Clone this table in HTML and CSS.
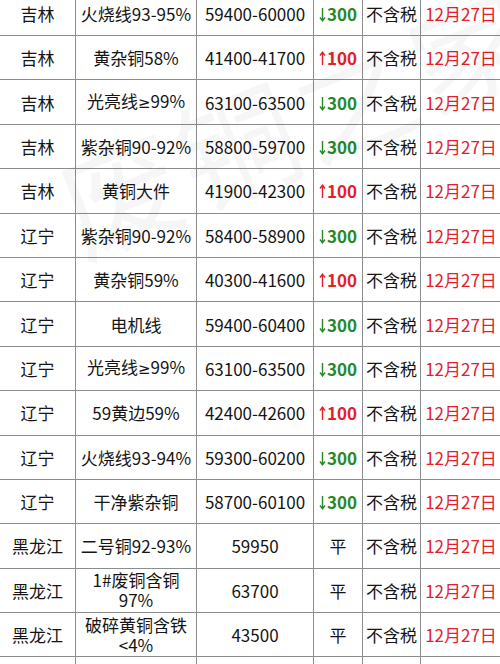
FILE: index.html
```html
<!DOCTYPE html>
<html lang="zh">
<head>
<meta charset="utf-8">
<title>铜价</title>
<link rel="stylesheet" href="styles.css">
</head>
<body>
<div class="page">
<table class="price">
<colgroup>
<col class="c1"><col class="c2"><col class="c3"><col class="c4"><col class="c5"><col class="c6">
</colgroup>
<tbody>
<tr><td>吉林</td><td>火烧线93-95%</td><td>59400-60000</td><td class="down"><svg class="ar" viewBox="0 0 7 15"><path d="M3.5 1V13.5M1 10.5L3.5 13.8L6 10.5"/></svg>300</td><td>不含税</td><td class="date">12月27日</td></tr>
<tr><td>吉林</td><td>黄杂铜58%</td><td>41400-41700</td><td class="up"><svg class="ar" viewBox="0 0 7 15"><path d="M3.5 14V1.5M1 4.5L3.5 1.2L6 4.5"/></svg>100</td><td>不含税</td><td class="date">12月27日</td></tr>
<tr><td>吉林</td><td>光亮线<span class="ge">≥</span>99%</td><td>63100-63500</td><td class="down"><svg class="ar" viewBox="0 0 7 15"><path d="M3.5 1V13.5M1 10.5L3.5 13.8L6 10.5"/></svg>300</td><td>不含税</td><td class="date">12月27日</td></tr>
<tr><td>吉林</td><td>紫杂铜90-92%</td><td>58800-59700</td><td class="down"><svg class="ar" viewBox="0 0 7 15"><path d="M3.5 1V13.5M1 10.5L3.5 13.8L6 10.5"/></svg>300</td><td>不含税</td><td class="date">12月27日</td></tr>
<tr><td>吉林</td><td>黄铜大件</td><td>41900-42300</td><td class="up"><svg class="ar" viewBox="0 0 7 15"><path d="M3.5 14V1.5M1 4.5L3.5 1.2L6 4.5"/></svg>100</td><td>不含税</td><td class="date">12月27日</td></tr>
<tr><td>辽宁</td><td>紫杂铜90-92%</td><td>58400-58900</td><td class="down"><svg class="ar" viewBox="0 0 7 15"><path d="M3.5 1V13.5M1 10.5L3.5 13.8L6 10.5"/></svg>300</td><td>不含税</td><td class="date">12月27日</td></tr>
<tr><td>辽宁</td><td>黄杂铜59%</td><td>40300-41600</td><td class="up"><svg class="ar" viewBox="0 0 7 15"><path d="M3.5 14V1.5M1 4.5L3.5 1.2L6 4.5"/></svg>100</td><td>不含税</td><td class="date">12月27日</td></tr>
<tr><td>辽宁</td><td>电机线</td><td>59400-60400</td><td class="down"><svg class="ar" viewBox="0 0 7 15"><path d="M3.5 1V13.5M1 10.5L3.5 13.8L6 10.5"/></svg>300</td><td>不含税</td><td class="date">12月27日</td></tr>
<tr><td>辽宁</td><td>光亮线<span class="ge">≥</span>99%</td><td>63100-63500</td><td class="down"><svg class="ar" viewBox="0 0 7 15"><path d="M3.5 1V13.5M1 10.5L3.5 13.8L6 10.5"/></svg>300</td><td>不含税</td><td class="date">12月27日</td></tr>
<tr><td>辽宁</td><td>59黄边59%</td><td>42400-42600</td><td class="up"><svg class="ar" viewBox="0 0 7 15"><path d="M3.5 14V1.5M1 4.5L3.5 1.2L6 4.5"/></svg>100</td><td>不含税</td><td class="date">12月27日</td></tr>
<tr><td>辽宁</td><td>火烧线93-94%</td><td>59300-60200</td><td class="down"><svg class="ar" viewBox="0 0 7 15"><path d="M3.5 1V13.5M1 10.5L3.5 13.8L6 10.5"/></svg>300</td><td>不含税</td><td class="date">12月27日</td></tr>
<tr><td>辽宁</td><td>干净紫杂铜</td><td>58700-60100</td><td class="down"><svg class="ar" viewBox="0 0 7 15"><path d="M3.5 1V13.5M1 10.5L3.5 13.8L6 10.5"/></svg>300</td><td>不含税</td><td class="date">12月27日</td></tr>
<tr><td>黑龙江</td><td>二号铜92-93%</td><td>59950</td><td>平</td><td>不含税</td><td class="date">12月27日</td></tr>
<tr><td>黑龙江</td><td class="two">1#废铜含铜<br>97%</td><td>63700</td><td>平</td><td>不含税</td><td class="date">12月27日</td></tr>
<tr><td>黑龙江</td><td class="two">破碎黄铜含铁<br>&lt;4%</td><td>43500</td><td>平</td><td>不含税</td><td class="date">12月27日</td></tr>
<tr><td></td><td></td><td></td><td></td><td></td><td></td></tr>
</tbody>
</table>
<div class="watermark" aria-hidden="true">废铜之家</div>
</div>
</body>
</html>
```
FILE: styles.css
```css
html, body {
  margin: 0;
  padding: 0;
  background: #ffffff;
}
.page {
  position: relative;
  width: 500px;
  height: 664px;
  overflow: hidden;
}
.price {
  border-collapse: collapse;
  table-layout: fixed;
  width: 502px;
  margin-left: -1px;
  margin-top: -9.4px;
  font-family: "Noto Sans CJK SC", "Noto Sans", sans-serif;
  font-size: 17px;
  line-height: 21px;
  color: #151515;
}
.c1 { width: 76px; }
.c2 { width: 121px; }
.c3 { width: 117px; }
.c4 { width: 49px; }
.c5 { width: 58px; }
.c6 { width: 81px; }
.price td {
  border: 1px solid #8c8c8c;
  height: 43.4px;
  padding: 0;
  text-align: center;
  vertical-align: middle;
  white-space: nowrap;
  overflow: hidden;
}
.price td.two {
  line-height: 20px;
}
.price .ge {
  font-family: "DejaVu Sans", sans-serif;
  font-size: 15px;
}
.price .down {
  color: #23892b;
  font-weight: bold;
}
.price .up {
  color: #e3202c;
  font-weight: bold;
}
.price .ar {
  width: 7px;
  height: 15px;
  margin-right: 1px;
  vertical-align: -1px;
  fill: none;
  stroke: currentColor;
  stroke-width: 1.4;
}
.price .date {
  color: #e3202c;
}
.watermark {
  position: absolute;
  left: 30px;
  top: 130px;
  font-family: "Noto Sans CJK SC", sans-serif;
  font-size: 120px;
  color: rgba(0, 0, 0, 0.035);
  transform: rotate(-22deg);
  transform-origin: left top;
  white-space: nowrap;
  pointer-events: none;
  letter-spacing: 6px;
}
```
